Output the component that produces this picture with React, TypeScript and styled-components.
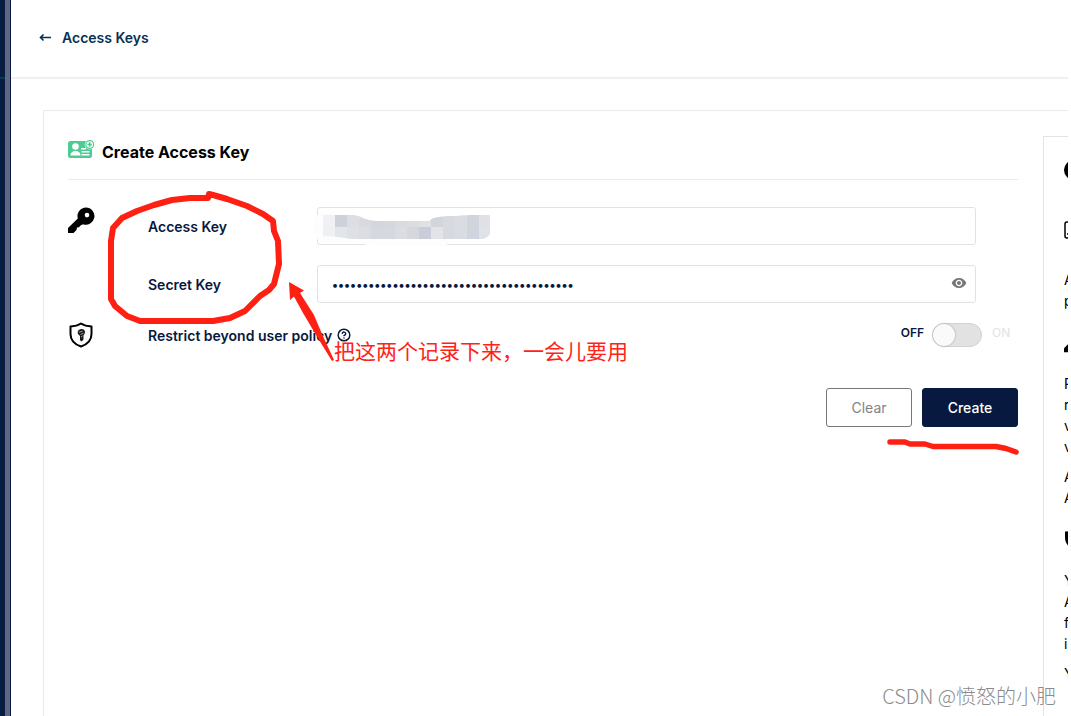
import React from "react";
import styled, { createGlobalStyle } from "styled-components";
import { MdVisibility } from "react-icons/md";
import { CircleHelp } from "lucide-react";

const GlobalStyle = createGlobalStyle`
  * { box-sizing: border-box; }
  body {
    margin: 0;
    background: #fff;
    color: #07193e;
    font: 14px/21px Inter, "Noto Sans CJK SC", sans-serif;
  }
`;

const Shell = styled.div`
  position: relative;
  display: flex;
  height: 100vh;
  overflow: hidden;
  padding-right: 3px;
`;

const SideRail = styled.div`
  flex: 0 0 11px;
  background: #081c42;
  border-right: 1px solid #081c42;
  display: flex;
`;

const RailMenu = styled.div`
  width: 5px;
  height: 79px;
  border-bottom: 2px solid #0a3556;
`;

const RailScroll = styled.div`
  width: 5px;
  background: #5f6680;
`;

const Main = styled.main`
  flex: 1;
  min-width: 0;
  display: flex;
  flex-direction: column;
`;

const TopBar = styled.header`
  height: 79px;
  flex: none;
  padding: 0 28px 2px;
  border-bottom: 2px solid #f0f0f0;
  display: flex;
  align-items: center;
`;

const BackLink = styled.a`
  display: flex;
  align-items: center;
  gap: 10px;
  color: #073052;
  font-weight: 600;
  text-decoration: none;
`;

const Card = styled.section`
  position: relative;
  flex: 1;
  margin: 31px 0 0 32px;
  padding: 25px 0 0 24px;
  border: solid #eaeaea;
  border-width: 1px 0 0 1px;
  display: flex;
  gap: 25px;
`;

const Form = styled.form`
  flex: 1;
  min-width: 0;
`;

const Title = styled.h1`
  margin: 0 0 27px;
  height: 44px;
  padding-bottom: 10px;
  border-bottom: 1px solid #eaeaea;
  display: flex;
  align-items: center;
  gap: 7px;
  color: #000;
  font-size: 16px;
  font-weight: 700;
`;

const TitleIcon = styled.svg`
  margin-bottom: 8px;
`;

const FieldRow = styled.div`
  display: grid;
  grid-template-columns: 80px 169px 1fr;
  align-items: center;
  height: 38px;
  margin: 0 42px 20px 0;
`;

const Label = styled.label`
  font-weight: 600;
  grid-column: 2;
`;

const InputWrap = styled.div`
  position: relative;
`;

const Input = styled.input`
  display: block;
  width: 100%;
  height: 38px;
  padding: 0 40px 0 14px;
  border: 1px solid #e2e2e2;
  border-radius: 3px;
  background: #fff;
  color: #07193e;
  font: 600 12px Inter, sans-serif;
  outline: none;
`;

const Mosaic = styled.svg`
  position: absolute;
  left: -5px;
  top: 3px;
`;

const EyeButton = styled.button`
  position: absolute;
  right: 9px;
  top: 10px;
  width: 16px;
  height: 16px;
  padding: 0;
  border: 0;
  background: none;
  color: #777;
`;

const SwitchRow = styled.div`
  display: flex;
  align-items: center;
  height: 28px;
  margin-top: -2px;
`;

const IconCell = styled.span<{ $top?: boolean }>`
  flex: 0 0 80px;
  align-self: ${(p) => (p.$top ? "start" : "center")};
  display: flex;
`;

const SwitchLabel = styled.label`
  flex: 1;
  display: flex;
  align-items: center;
  gap: 5px;
  font-weight: 600;
`;

const SwitchText = styled.span<{ $muted?: boolean }>`
  width: ${(p) => (p.$muted ? "26px" : "auto")};
  padding-bottom: 6px;
  font-size: 12px;
  font-weight: ${(p) => (p.$muted ? 400 : 600)};
  color: ${(p) => (p.$muted ? "#e2e2e2" : "#07193e")};
`;

const Switch = styled.input`
  appearance: none;
  width: 50px;
  height: 24px;
  margin: 0 10px 0 8px;
  border: 1px solid #d2d2d2;
  border-radius: 12px;
  background: #e2e2e2;
  &::before {
    content: "";
    display: block;
    width: 22px;
    height: 22px;
    border-radius: 50%;
    background: #fafafa;
    box-shadow: 0 0 2px #999;
  }
`;

const Actions = styled.div`
  position: relative;
  display: flex;
  justify-content: flex-end;
  gap: 10px;
  margin-top: 39px;
`;

const Button = styled.button<{ $primary?: boolean }>`
  width: ${(p) => (p.$primary ? "96px" : "86px")};
  height: 39px;
  padding: 0;
  border: 1px solid ${(p) => (p.$primary ? "#07193e" : "#767676")};
  border-radius: 3px;
  background: ${(p) => (p.$primary ? "#07193e" : "#fff")};
  color: ${(p) => (p.$primary ? "#fff" : "#838383")};
  font: ${(p) => (p.$primary ? 500 : 400)} 14px Inter, sans-serif;
`;

const Underline = styled.svg`
  position: absolute;
  right: -1px;
  top: 48px;
`;

const Marks = styled.svg`
  position: absolute;
  left: 56px;
  top: 79px;
  pointer-events: none;
`;

const Note = styled.div`
  position: absolute;
  left: 290px;
  top: 224px;
  color: #ff2216;
  font: 21px/31px "Noto Sans CJK SC", sans-serif;
  white-space: nowrap;
`;

const Help = styled.aside`
  flex: 0 0 25px;
  overflow: hidden;
  padding: 23px 0 0 20px;
  border: solid #e4e4e4;
  border-width: 1px 0 0 1px;
  color: #000;
`;

const HelpIcon = styled.div<{ $tall?: boolean }>`
  height: ${(p) => (p.$tall ? "89px" : "62px")};
  padding-top: ${(p) => (p.$tall ? "10px" : "0")};
  display: flex;
  align-items: center;
  & svg { flex: none; }
`;

const HelpText = styled.p`
  margin: 0;
  white-space: pre;
  & + & { margin-top: 9px; }
`;

const Watermark = styled.div`
  position: absolute;
  right: 15px;
  bottom: 5px;
  color: #8c8c8c;
  font: 300 20px/30px "Noto Sans CJK SC", sans-serif;
`;

const KeyIcon = () => (
  <svg width="28" height="28" viewBox="0 0 28 28">
    <path
      fill="#000"
      fillRule="evenodd"
      d="M18 .5a8.600 8.600 0 1 1-3 16.700l-2.500 1.300-1.500 1.800-2 .2-.5 2.500L5.500 26H0v-5L9.800 11.500A8.600 8.600 0 0 1 18 .5zm1 5.300a2.300 2.300 0 1 0 0 4.600 2.300 2.300 0 0 0 0-4.600z"
    />
  </svg>
);

const ShieldIcon = () => (
  <svg width="26" height="26" viewBox="0 0 26 26">
    <path d="M13 1.500c3 2 6.500 2.800 10.500 3v7.500c0 6-4.500 10.500-10.500 12.500C7 22.500 2.500 18 2.500 12V4.500C6.500 4.300 10 3.500 13 1.500z" fill="none" stroke="#000" strokeWidth="2" strokeLinejoin="round" />
    <path d="M13.500 7c2 0 3.500 1.300 3.500 3 0 1.400-.6 2.500-1.500 3.200v4.300l-1.800 2-1.700-1.300V13.700c-1.300-.4-2.300-1.700-2.300-3.200C9.700 8.500 11.500 7 13.500 7z" fill="#1a1a1a" />
    <path d="M11 10.200l3.500-1M12.500 12.500l3-1.300M13 15l1.500-1" stroke="#ddd" strokeWidth=".7" />
  </svg>
);

const topRow = ["#eff1f4", "#cfd1d8", "#dddee3", "#d9dae0", "#d4d6dc", "#d5d7dd", "#d9dae0", "#dcdde2", "#dfe1e5", "#d3d5dc", "#d8dae0", "#dadce1", "#d2d4dc", "#dfe1e5"];
const bottomRow = ["#eef1f3", "#e2e6ea", "#dfe0e5", "#dcdde2", "#d5d8de", "#d6d8df", "#dbdde2", "#d6d7de", "#cbccd9", "#e2e4e8", "#d7d9e0", "#dadce3", "#d0d4de", "#dfe3e8"];

export default function App() {
  return (
    <>
      <GlobalStyle />
      <Shell>
        <SideRail>
          <RailMenu />
          <RailScroll />
        </SideRail>
        <Main>
          <TopBar>
            <BackLink href="#">
              <svg width="13" height="10" viewBox="0 0 13 10" fill="none" stroke="currentColor" strokeWidth="1.600">
                <path d="M12 4.500H2M4.500 1.500l-3 3 3 3" />
              </svg>
              Access Keys
            </BackLink>
          </TopBar>
          <Card>
            <Form onSubmit={(e) => e.preventDefault()}>
              <Title>
                <TitleIcon width="27" height="20" viewBox="0 0 27 20">
                  <rect y="2" width="24" height="17" rx="2.500" fill="#4ccb92" />
                  <circle cx="7.500" cy="7.500" r="3.300" fill="#fff" />
                  <path d="M2.500 16.500c0-3 2-4.500 5-4.500s5 1.500 5 4.500z" fill="#fff" />
                  <path d="M13 9.700h5M13.500 12.700h8M13.500 15.700h8" stroke="#fff" strokeWidth="1.400" />
                  <circle cx="21.700" cy="5.500" r="5" fill="#fff" />
                  <circle cx="21.700" cy="5.500" r="3.900" fill="#fff" stroke="#4ccb92" strokeWidth="1.200" />
                  <path d="M19.500 5.500h4.400M21.700 3.300v4.400" stroke="#4ccb92" strokeWidth="1.700" />
                </TitleIcon>
                Create Access Key
              </Title>
              <FieldRow>
                <IconCell $top><KeyIcon /></IconCell>
                <Label htmlFor="access">Access Key</Label>
                <InputWrap>
                  <Input id="access" type="text" />
                  <Mosaic width="180" height="38" viewBox="0 0 180 38">
                    <defs>
                      <clipPath id="smear">
                        <path d="M11 5h31c7 1 12 6 24 6h51c4-5 18-5 27-5 9-1 11-1 34-1v19c-2 3-5 5-9 5H42c-10 0-15-3-31-3z" />
                      </clipPath>
                    </defs>
                    <path d="M10 3h30v30H14C-2 33-2 4 10 3zM40 29h95v7H65c-10 0-18-3-25-7z" fill="#fdfdfd" />
                    <g clipPath="url(#smear)">
                      {topRow.map((c, i) => <rect key={i} x={11 + i * 12} y="5" width="12" height="12" fill={c} />)}
                      {bottomRow.map((c, i) => <rect key={i} x={11 + i * 12} y="17" width="12" height="12" fill={c} />)}
                    </g>
                  </Mosaic>
                </InputWrap>
              </FieldRow>
              <FieldRow>
                <Label htmlFor="secret">Secret Key</Label>
                <InputWrap>
                  <Input id="secret" type="password" defaultValue={"x".repeat(40)} />
                  <EyeButton type="button" aria-label="Show">
                    <MdVisibility size={16} />
                  </EyeButton>
                </InputWrap>
              </FieldRow>
              <SwitchRow>
                <IconCell><ShieldIcon /></IconCell>
                <SwitchLabel htmlFor="restrict">
                  Restrict beyond user policy
                  <CircleHelp size={14} strokeWidth={2.5} />
                </SwitchLabel>
                <SwitchText>OFF</SwitchText>
                <Switch id="restrict" type="checkbox" />
                <SwitchText $muted>ON</SwitchText>
              </SwitchRow>
              <Actions>
                <Button type="reset">Clear</Button>
                <Button type="submit" $primary>Create</Button>
                <Underline width="134" height="20" viewBox="0 0 134 20">
                  <path d="M5 6h15l5 2h15l8 2.500h63l10 2 10 3.500" fill="none" stroke="#ff2014" strokeWidth="5.500" strokeLinecap="round" strokeLinejoin="round" />
                </Underline>
              </Actions>
            </Form>
            <Help>
              <svg width="20" height="20" viewBox="0 0 20 20" display="block">
                <circle cx="10" cy="10" r="10" />
              </svg>
              <HelpIcon $tall>
                <svg width="20" height="18" viewBox="0 0 20 18" fill="none" stroke="#000" strokeWidth="1.500">
                  <rect x="1" y="1" width="18" height="16" rx="2" />
                  <path d="M3 13h4" />
                </svg>
              </HelpIcon>
              <HelpText>{"A\np"}</HelpText>
              <HelpIcon>
                <svg width="22" height="22" viewBox="0 0 28 28">
                  <path d="M0 27v-5L10 12l6 6-9 9z" />
                </svg>
              </HelpIcon>
              <HelpText>{"R\nr\nv\nv"}</HelpText>
              <HelpText>{"A\nA"}</HelpText>
              <HelpIcon>
                <svg width="20" height="22" viewBox="0 0 20 22">
                  <path d="M10 1c3 2 5 2 9 2.500v6c0 6-4 10-9 12-5-2-9-6-9-12v-6C5 3 7 3 10 1z" />
                </svg>
              </HelpIcon>
              <HelpText>{"Y\nA\nf\ni"}</HelpText>
              <HelpText>Y</HelpText>
            </Help>
            <Marks width="240" height="175" viewBox="100 190 240 175">
              <path
                d="M213 195l14 4 20 7 16 8 10 7 1 10 4 10 1 23-5 20-5 6-9 6-15 15-15 7-17 3h-73l-13-5-12-10-4-7v-58l2-13 9-10 15-7 17-6 18-5 18-2h18l1-4z"
                fill="none" stroke="#ff2014" strokeWidth="6" strokeLinejoin="round" strokeLinecap="round"
              />
              <path d="M289 282L304 290.500 300 293 314 315 322 334 334 360 332 361 316 335 303 313 294 296.500 290 300z" fill="#ff2014" />
            </Marks>
            <Note>把这两个记录下来，一会儿要用</Note>
          </Card>
        </Main>
        <Watermark>CSDN @愤怒的小肥</Watermark>
      </Shell>
    </>
  );
}
